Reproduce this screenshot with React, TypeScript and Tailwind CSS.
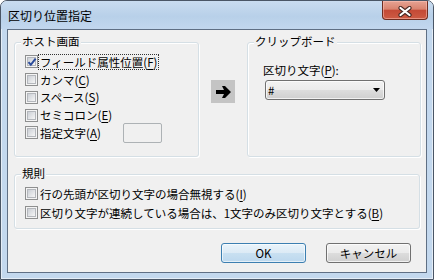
import React from "react";

const font = "font-['Noto_Sans_CJK_JP',sans-serif]";

const CheckBox = ({ checked = false }: { checked?: boolean }) => (
  <div className="relative h-[13px] w-[13px] shrink-0 border border-[#8e8f8f] bg-[#f4f4f4] p-[1px]">
    <div className="h-full w-full border border-[#b4b7bc] bg-gradient-to-br from-[#cbcfd5] to-[#f6f6f6]" />
    {checked && (
      <svg
        className="absolute left-[1px] top-[1px]"
        width="10"
        height="10"
        viewBox="0 0 10 10"
      >
        <path
          d="M1.5 5.2 L3.8 7.8 L8.6 1.6"
          fill="none"
          stroke="#2b4c9b"
          strokeWidth="2"
        />
      </svg>
    )}
  </div>
);

const Row = ({
  children,
  checked,
  focused,
  h = "h-[17.75px]",
}: {
  children: React.ReactNode;
  checked?: boolean;
  focused?: boolean;
  h?: string;
}) => (
  <div className={`flex items-center pl-[10px] ${h}`}>
    <CheckBox checked={checked} />
    <span
      className={`ml-[0px] border px-[1px] leading-[14px] ${
        focused ? "border-dotted border-[#333]" : "border-transparent"
      }`}
    >
      {children}
    </span>
  </div>
);

const Group = ({
  label,
  className,
  children,
}: {
  label: string;
  className: string;
  children: React.ReactNode;
}) => (
  <div
    className={`relative shrink-0 rounded-[3px] border border-[#d5dfe5] shadow-[inset_1px_1px_0_#ffffff,1px_1px_0_#ffffff] ${className}`}
  >
    <span className="absolute left-[6px] top-[-9px] bg-[#f0f0f0] px-[1px] leading-[14px]">
      {label}
    </span>
    {children}
  </div>
);

const U = ({ children }: { children: React.ReactNode }) => (
  <span className="underline underline-offset-[2px]">{children}</span>
);

export default function App() {
  return (
    <div
      className={`${font} h-[280px] w-[434px] overflow-hidden rounded-t-[7px] border border-[#4a5666] bg-[#c3d8ee] text-[11.5px] text-black shadow-[inset_0_0_0_1px_rgba(255,255,255,0.55)]`}
    >
      <div className="flex h-[28px] items-start justify-between bg-[linear-gradient(to_bottom,#c9dcf0,#b8d0e9_55%,#c2d7ee)] pl-[7px] pr-[5px]">
        <span className="pt-[7px] text-[12px] leading-[16px]">
          区切り位置指定
        </span>
        <div className="flex h-[19px] w-[46px] items-center justify-center rounded-b-[4px] border border-t-0 border-[#6e2d21] bg-[linear-gradient(to_bottom,#e6a393_0%,#d9836f_45%,#c44a36_52%,#cd5b44_100%)] shadow-[inset_0_0_0_1px_rgba(255,200,190,0.5)]">
          <svg width="14" height="11" viewBox="0 0 14 11" className="mt-[2px]">
            <path
              d="M2.5 2 L11.5 9 M11.5 2 L2.5 9"
              stroke="#4a2a25"
              strokeWidth="4.2"
              strokeLinecap="round"
            />
            <path
              d="M2.5 2 L11.5 9 M11.5 2 L2.5 9"
              stroke="#ffffff"
              strokeWidth="2.2"
              strokeLinecap="round"
            />
          </svg>
        </div>
      </div>
      <div className="px-[6px] pb-[6px]">
        <div className="h-[244px] border border-[#5f6f84] bg-[#f0f0f0] pl-[6px] pt-[12px]">
          <div className="flex h-[115px] items-start">
            <Group label="ホスト画面" className="h-[115px] w-[185px] pt-[10px]">
              <Row checked focused>
                フィールド属性位置(<U>F</U>)
              </Row>
              <Row>
                カンマ(<U>C</U>)
              </Row>
              <Row>
                スペース(<U>S</U>)
              </Row>
              <Row>
                セミコロン(<U>E</U>)
              </Row>
              <div className="flex h-[17.75px] items-center">
                <Row>
                  指定文字(<U>A</U>)
                </Row>
                <div className="ml-[20px] h-[20px] w-[39px] rounded-[2px] border border-[#adb2b5] bg-[#f0f0f0]" />
              </div>
            </Group>
            <div className="ml-[12px] mt-[38px] flex h-[23px] w-[24px] shrink-0 items-center justify-center bg-[#c4c4c4]">
              <svg width="17" height="12" viewBox="0 0 17 12">
                <polygon
                  points="1,4 9,4 7,0 10,0 16,6 10,12 7,12 9,8 1,8"
                  fill="#000000"
                />
              </svg>
            </div>
            <Group
              label="クリップボード"
              className="ml-[12px] h-[115px] w-[174px] pl-[15px] pt-[20px]"
            >
              <div className="leading-[14px]">
                区切り文字(<U>P</U>):
              </div>
              <div className="ml-[2px] mt-[3px] flex h-[20px] w-[120px] items-center justify-between rounded-[3px] border border-[#707070] bg-[linear-gradient(to_bottom,#f2f2f2_0%,#ebebeb_50%,#dddddd_50%,#cfcfcf_100%)] pl-[2px] pr-[4px] shadow-[inset_0_0_0_1px_rgba(255,255,255,0.7)]">
                <span className="leading-[14px]">#</span>
                <svg width="7" height="4" viewBox="0 0 7 4">
                  <polygon points="0,0 7,0 3.5,4" fill="#000000" />
                </svg>
              </div>
            </Group>
          </div>
          <Group label="規則" className="mt-[17px] h-[55px] w-[406px] pt-[9px]">
            <Row h="h-[19px]">
              行の先頭が区切り文字の場合無視する(<U>I</U>)
            </Row>
            <Row h="h-[19px]">
              区切り文字が連続している場合は、1文字のみ区切り文字とする(
              <U>B</U>)
            </Row>
          </Group>
          <div className="mt-[14px] flex justify-end gap-[20px] pr-[15px]">
            <button
              type="button"
              className="h-[20px] w-[85px] rounded-[3px] border border-[#3c7fb1] bg-[linear-gradient(to_bottom,#e9f4fb_0%,#dceaf5_50%,#c9e0f1_50%,#bcd8ee_100%)] leading-[14px] shadow-[inset_0_0_0_1px_rgba(255,255,255,0.6)]"
            >
              OK
            </button>
            <button
              type="button"
              className="h-[20px] w-[85px] rounded-[3px] border border-[#707070] bg-[linear-gradient(to_bottom,#f2f2f2_0%,#ebebeb_50%,#dddddd_50%,#cfcfcf_100%)] leading-[14px] shadow-[inset_0_0_0_1px_rgba(255,255,255,0.7)]"
            >
              キャンセル
            </button>
          </div>
        </div>
      </div>
    </div>
  );
}
